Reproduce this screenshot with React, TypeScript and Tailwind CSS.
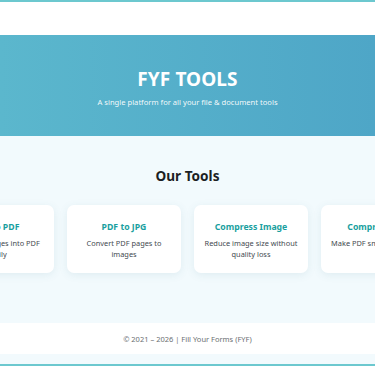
import React from "react";

const tools = [
  { title: "JPG to PDF", desc: "Convert images into PDF easily" },
  { title: "PDF to JPG", desc: "Convert PDF pages to images" },
  { title: "Compress Image", desc: "Reduce image size without quality loss" },
  { title: "Compress PDF", desc: "Make PDF smaller instantly" },
];

export default function App() {
  return (
    <div
      className="w-[375px] h-[366px] overflow-hidden bg-[#f2fafd] flex flex-col"
      style={{ fontFamily: '"Noto Sans", "Open Sans", sans-serif' }}
    >
      <div className="h-[2px] bg-[#6cc8cf] shrink-0" />
      <header className="h-[33px] bg-white shrink-0" />
      <section className="h-[101px] shrink-0 bg-gradient-to-r from-[#5bb7cd] to-[#4ea6c7] flex flex-col items-center pt-[32px] text-white">
        <h1 className="text-[19px] leading-[24px] font-bold tracking-[0.1px]">FYF TOOLS</h1>
        <p className="text-[7.6px] leading-[12px] mt-[5px] text-white/95">
          A single platform for all your file &amp; document tools
        </p>
      </section>
      <section className="h-[187px] shrink-0 flex flex-col items-center">
        <h2 className="mt-[30px] text-[13.6px] leading-[20px] font-bold text-[#1c1f24]">Our Tools</h2>
        <div className="mt-[19px] w-full flex justify-center gap-[13px]">
          {tools.map((t) => (
            <div
              key={t.title}
              className="w-[114px] h-[68px] shrink-0 bg-white rounded-[7px] shadow-[0_2px_8px_rgba(60,120,140,0.10)] flex flex-col items-center pt-[16px] px-[6px] text-center"
            >
              <div className="text-[8.7px] leading-[13px] font-bold text-[#1a9fa0]">{t.title}</div>
              <div className="mt-[4px] text-[7.4px] leading-[11px] text-[#444a50]">{t.desc}</div>
            </div>
          ))}
        </div>
      </section>
      <footer className="h-[31px] shrink-0 bg-white flex items-center justify-center">
        <span className="text-[7.5px] leading-[12px] text-[#6b6f73]">© 2021 – 2026 | Fill Your Forms (FYF)</span>
      </footer>
      <div className="h-[10px] shrink-0" />
      <div className="h-[2px] shrink-0 bg-[#6cc8cf]" />
    </div>
  );
}
